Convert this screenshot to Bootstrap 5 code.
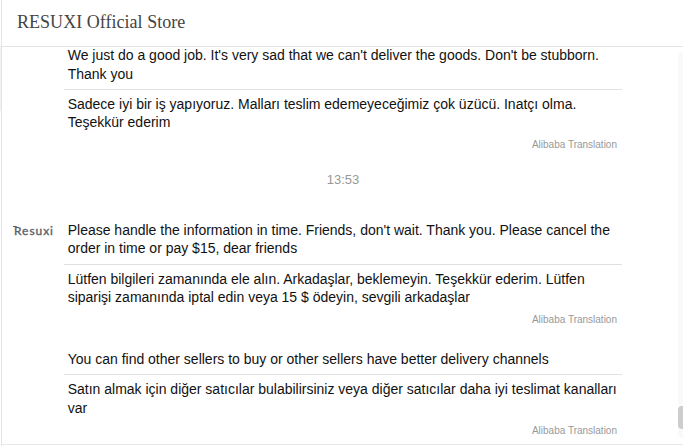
<!DOCTYPE html>
<html lang="tr">
<head>
<meta charset="utf-8">
<title>RESUXI Official Store</title>
<link href="https://cdn.jsdelivr.net/npm/bootstrap@5.3.0/dist/css/bootstrap.min.css" rel="stylesheet">
<style>
body{font-family:"Liberation Sans",Arial,sans-serif;font-size:14px;line-height:18.4px;color:#111;background:#fff;height:446px}
.side-edge{width:2px;border-right:1px solid #e3e4e8}
.side-item{margin-top:46px;height:65px;background:#f0f1f3}
.chat-head{height:47px;padding:0 0 3px 15px;border-bottom:1px solid #e3e4e8;flex:none}
.chat-head h1{font:18px/24px "Liberation Serif","Times New Roman",serif;letter-spacing:.03px;color:#444}
.chat-body{height:398px;border-bottom:1px solid #e8e8ea}
.chat-log{margin-top:-.8px}
.avatar-box{width:62px;flex:none;padding:2.5px 0 0 11px}
.bubble{width:558px}
.bubble p{padding-left:3.7px;letter-spacing:-.003px}
.source-text{padding-bottom:5.8px;border-bottom:1px solid #e0e0e3}
.translated{padding-top:5px}
.credit{font-size:10px;line-height:12px;color:#999;padding-right:5px;margin-top:7.4px}
.time-stamp{width:558px;margin:20.3px 0 31.3px 62px;font-size:13px;color:#999}
.msg-next{margin-top:24.4px}
.track{width:5px;height:387px;margin-top:4px;background:#f9f9f9;border-radius:5px 0 0 5px;padding-top:355px}
.thumb{height:23px;background:#cdcdcd;border-radius:4px 0 0 4px}
</style>
</head>
<body class="d-flex overflow-hidden">
<div class="side-edge flex-shrink-0"><div class="side-item"></div></div>
<main class="flex-grow-1 d-flex flex-column">
<header class="chat-head d-flex align-items-center"><h1 class="m-0">RESUXI Official Store</h1></header>
<section class="chat-body d-flex overflow-hidden flex-shrink-0">
<div class="chat-log flex-grow-1 text-nowrap">
<article class="d-flex">
<div class="avatar-box"></div>
<div class="bubble">
<div class="source-text"><p class="m-0">We just do a good job. It's very sad that we can't deliver the goods. Don't be stubborn.<br>Thank you</p></div>
<div class="translated"><p class="m-0">Sadece iyi bir iş yapıyoruz. Malları teslim edemeyeceğimiz çok üzücü. Inatçı olma.<br>Teşekkür ederim</p></div>
<div class="credit text-end">Alibaba Translation</div>
</div>
</article>
<div class="time-stamp text-center">13:53</div>
<article class="d-flex">
<div class="avatar-box">
<svg class="d-block overflow-visible" width="46" height="16" role="img" aria-label="Resuxi"><text x="1" y="11" textLength="39" lengthAdjust="spacing" font-family="Lato, sans-serif" font-weight="400" font-size="12" fill="#5c6068" stroke="#5c6068" stroke-width=".35">Resuxi</text><path d="M0 2.5H3.6" stroke="#5c6068" stroke-width="1"/></svg>
</div>
<div class="bubble">
<div class="source-text"><p class="m-0">Please handle the information in time. Friends, don't wait. Thank you. Please cancel the<br>order in time or pay $15, dear friends</p></div>
<div class="translated"><p class="m-0">Lütfen bilgileri zamanında ele alın. Arkadaşlar, beklemeyin. Teşekkür ederim. Lütfen<br>siparişi zamanında iptal edin veya 15 $ ödeyin, sevgili arkadaşlar</p></div>
<div class="credit text-end">Alibaba Translation</div>
</div>
</article>
<article class="d-flex msg-next">
<div class="avatar-box"></div>
<div class="bubble">
<div class="source-text"><p class="m-0">You can find other sellers to buy or other sellers have better delivery channels</p></div>
<div class="translated"><p class="m-0">Satın almak için diğer satıcılar bulabilirsiniz veya diğer satıcılar daha iyi teslimat kanalları<br>var</p></div>
<div class="credit text-end">Alibaba Translation</div>
</div>
</article>
</div>
<div class="track flex-shrink-0"><div class="thumb"></div></div>
</section>
</main>
<script src="https://cdn.jsdelivr.net/npm/bootstrap@5.3.0/dist/js/bootstrap.bundle.min.js"></script>
</body>
</html>
